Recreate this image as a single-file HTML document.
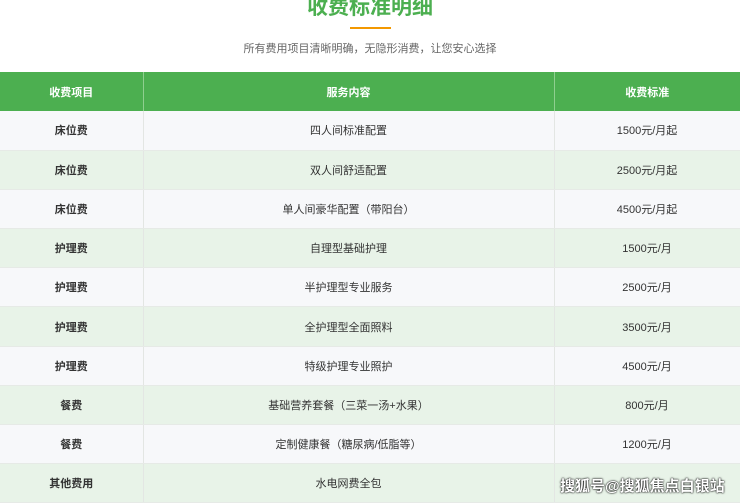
<!DOCTYPE html>
<html><head><meta charset="utf-8"><style>
*{margin:0;padding:0;box-sizing:border-box}
html,body{width:740px;height:503px;overflow:hidden}
body{background:#fff;font-family:"Liberation Sans","Noto Sans CJK SC",sans-serif;position:relative}
.title{position:absolute;top:-6px;left:0;width:740px;text-align:center;color:#4caf50;font-size:21px;font-weight:bold;line-height:28px}
.line{position:absolute;left:350px;top:27px;width:41px;height:2px;background:#f39800}
.sub{position:absolute;top:42px;left:0;width:740px;text-align:center;color:#666;font-size:11px;line-height:14px}
table{position:absolute;top:72px;left:0;width:740px;border-collapse:collapse;table-layout:fixed}
th{background:#4caf50;color:#fff;font-size:11px;font-weight:bold;height:39px;border-right:1px solid #8fcf8f}
td{height:39.2px;text-align:center;font-size:11px;color:#333;border-right:1px solid #e3e6e3;border-bottom:1px solid #e6eae6}
td:first-child{font-weight:bold;color:#333}
tr:nth-child(odd) td{background:#f7f8fa}
tr:nth-child(even) td{background:#e8f3e8}
.wm{position:absolute;left:560px;top:477px;font-size:15px;color:#fff;font-weight:bold;text-shadow:0 0 2px #000,0 0 1px #000;white-space:nowrap;line-height:20px}
</style></head><body>
<div class="title">收费标准明细</div>
<div class="line"></div>
<div class="sub">所有费用项目清晰明确，无隐形消费，让您安心选择</div>
<table>
<colgroup><col style="width:143px"><col style="width:411px"><col style="width:186px"></colgroup>
<thead><tr><th>收费项目</th><th>服务内容</th><th style="border-right:none">收费标准</th></tr></thead>
<tbody>
<tr><td>床位费</td><td>四人间标准配置</td><td>1500元/月起</td></tr>
<tr><td>床位费</td><td>双人间舒适配置</td><td>2500元/月起</td></tr>
<tr><td>床位费</td><td>单人间豪华配置（带阳台）</td><td>4500元/月起</td></tr>
<tr><td>护理费</td><td>自理型基础护理</td><td>1500元/月</td></tr>
<tr><td>护理费</td><td>半护理型专业服务</td><td>2500元/月</td></tr>
<tr><td>护理费</td><td>全护理型全面照料</td><td>3500元/月</td></tr>
<tr><td>护理费</td><td>特级护理专业照护</td><td>4500元/月</td></tr>
<tr><td>餐费</td><td>基础营养套餐（三菜一汤+水果）</td><td>800元/月</td></tr>
<tr><td>餐费</td><td>定制健康餐（糖尿病/低脂等）</td><td>1200元/月</td></tr>
<tr><td>其他费用</td><td>水电网费全包</td><td></td></tr>
</tbody></table>
<div class="wm">搜狐号@搜狐焦点白银站</div>
</body></html>
